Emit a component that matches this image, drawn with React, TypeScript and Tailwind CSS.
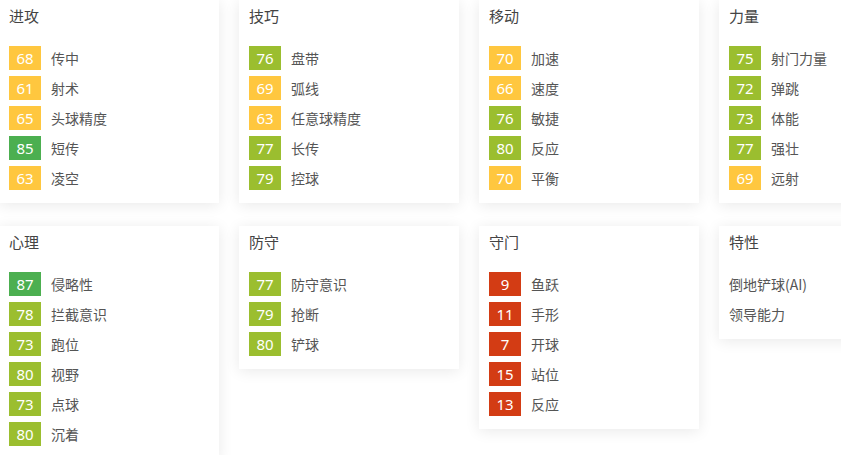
import React from "react";

type Stat = { value: number; label: string };
type Group = { title: string; stats?: Stat[]; traits?: string[] };

const badgeColor = (v: number) => {
  if (v >= 85) return "bg-[#4caf50]";
  if (v >= 71) return "bg-[#9bbe2f]";
  if (v >= 50) return "bg-[#ffc73f]";
  return "bg-[#d33c14]";
};

const groups: Group[] = [
  {
    title: "进攻",
    stats: [
      { value: 68, label: "传中" },
      { value: 61, label: "射术" },
      { value: 65, label: "头球精度" },
      { value: 85, label: "短传" },
      { value: 63, label: "凌空" },
    ],
  },
  {
    title: "技巧",
    stats: [
      { value: 76, label: "盘带" },
      { value: 69, label: "弧线" },
      { value: 63, label: "任意球精度" },
      { value: 77, label: "长传" },
      { value: 79, label: "控球" },
    ],
  },
  {
    title: "移动",
    stats: [
      { value: 70, label: "加速" },
      { value: 66, label: "速度" },
      { value: 76, label: "敏捷" },
      { value: 80, label: "反应" },
      { value: 70, label: "平衡" },
    ],
  },
  {
    title: "力量",
    stats: [
      { value: 75, label: "射门力量" },
      { value: 72, label: "弹跳" },
      { value: 73, label: "体能" },
      { value: 77, label: "强壮" },
      { value: 69, label: "远射" },
    ],
  },
  {
    title: "心理",
    stats: [
      { value: 87, label: "侵略性" },
      { value: 78, label: "拦截意识" },
      { value: 73, label: "跑位" },
      { value: 80, label: "视野" },
      { value: 73, label: "点球" },
      { value: 80, label: "沉着" },
    ],
  },
  {
    title: "防守",
    stats: [
      { value: 77, label: "防守意识" },
      { value: 79, label: "抢断" },
      { value: 80, label: "铲球" },
    ],
  },
  {
    title: "守门",
    stats: [
      { value: 9, label: "鱼跃" },
      { value: 11, label: "手形" },
      { value: 7, label: "开球" },
      { value: 15, label: "站位" },
      { value: 13, label: "反应" },
    ],
  },
  { title: "特性", traits: ["倒地铲球(AI)", "领导能力"] },
];

const StatCard: React.FC<{ group: Group }> = ({ group }) => (
  <div className="w-[220px] bg-white shadow-[0_2px_14px_rgba(0,0,0,0.09)] px-[10px] pt-[6px] pb-[13px]">
    <h3 className="text-[15px] leading-5 text-[#444]">{group.title}</h3>
    <ul className="mt-5 flex flex-col gap-[6px]">
      {group.stats?.map((s) => (
        <li key={s.label} className="flex items-center h-6">
          <span
            className={`w-8 h-6 flex items-center justify-center text-white text-[15px] font-['Noto_Sans',sans-serif] ${badgeColor(s.value)}`}
          >
            {s.value}
          </span>
          <span className="ml-[10px] text-sm text-[#555]">{s.label}</span>
        </li>
      ))}
      {group.traits?.map((t) => (
        <li key={t} className="flex items-center h-6 text-sm text-[#555]">
          {t}
        </li>
      ))}
    </ul>
  </div>
);

export default function App() {
  return (
    <div className="w-[841px] h-[455px] overflow-hidden bg-white font-['Noto_Sans_CJK_SC','Noto_Sans',sans-serif]">
      <div className="-ml-px grid grid-cols-[repeat(4,220px)] gap-x-5 gap-y-[23px] items-start w-max">
        {groups.map((g) => (
          <StatCard key={g.title} group={g} />
        ))}
      </div>
    </div>
  );
}
